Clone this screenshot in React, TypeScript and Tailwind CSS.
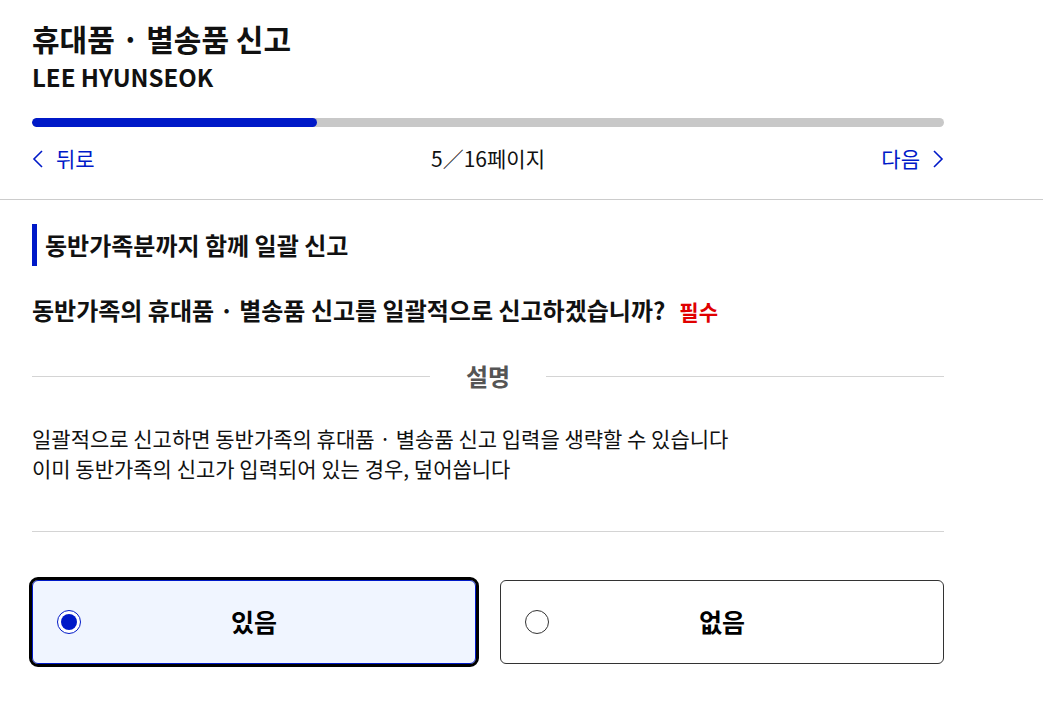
import React, { useState } from "react";

const font = { fontFamily: '"Noto Sans CJK KR", "Noto Sans", sans-serif' };

const Chevron = ({ dir }: { dir: "left" | "right" }) => (
  <svg width="12" height="20" viewBox="0 0 12 20" fill="none" stroke="currentColor" strokeWidth="1.6">
    {dir === "left" ? <path d="M10 2 L2 10 L10 18" /> : <path d="M2 2 L10 10 L2 18" />}
  </svg>
);

const Option = ({ label, selected, onClick }: { label: string; selected: boolean; onClick: () => void }) => (
  <button
    onClick={onClick}
    className={
      "relative flex h-[84px] items-center rounded-md px-6 " +
      (selected
        ? "border border-[#0019c8] bg-[#f0f5ff] outline-[3px] outline-black"
        : "border border-[#333] bg-white")
    }
  >
    <span
      className={
        "flex h-6 w-6 items-center justify-center rounded-full border bg-white " +
        (selected ? "border-[#0019c8]" : "border-[#333]")
      }
    >
      {selected && <span className="h-4 w-4 rounded-full bg-[#0019c8]" />}
    </span>
    <span className="absolute inset-0 flex items-center justify-center text-[25px] font-bold text-black">
      {label}
    </span>
  </button>
);

export default function App() {
  const [choice, setChoice] = useState("yes");

  return (
    <div className="min-h-screen bg-white text-[#111]" style={font}>
      {/* Header */}
      <header className="border-b border-[#ccc] pb-5">
        <div className="mx-8 w-[912px] pt-[17px]">
          <h1 className="text-[30px] font-bold leading-[42px]">휴대품 · 별송품 신고</h1>
          <p className="text-[24px] font-bold leading-[36px]">LEE HYUNSEOK</p>
          <div className="mt-[23px] h-[9px] w-full overflow-hidden rounded-full bg-[#c8c8c8]">
            <div className="h-full rounded-full bg-[#0019c8]" style={{ width: `${(5 / 16) * 100}%` }} />
          </div>
          <nav className="mt-3 flex h-10 items-center justify-between text-[21px]">
            <button className="flex items-center gap-3 text-[#0019c8]">
              <Chevron dir="left" />
              <span>뒤로</span>
            </button>
            <span className="text-[#111]">5／16페이지</span>
            <button className="flex items-center gap-3 text-[#0019c8]">
              <span>다음</span>
              <Chevron dir="right" />
            </button>
          </nav>
        </div>
      </header>

      {/* Content */}
      <main className="mx-8 w-[912px] pt-6">
        <h2 className="flex h-[42px] items-center border-l-[5px] border-[#0019c8] pl-2 text-[24px] font-bold">
          동반가족분까지 함께 일괄 신고
        </h2>

        <p className="mt-[27px] flex items-baseline gap-[14px] text-[24px] font-bold leading-[33px]">
          동반가족의 휴대품 · 별송품 신고를 일괄적으로 신고하겠습니까?
          <span className="text-[21px] text-[#e00000]">필수</span>
        </p>

        <div className="mt-[33px] flex items-center">
          <div className="h-px flex-1 bg-[#d4d4d4]" />
          <span className="px-9 text-[24px] font-bold leading-[30px] text-[#555]">설명</span>
          <div className="h-px flex-1 bg-[#d4d4d4]" />
        </div>

        <div className="mt-8 text-[21px] leading-[30px]">
          <p>일괄적으로 신고하면 동반가족의 휴대품 · 별송품 신고 입력을 생략할 수 있습니다</p>
          <p>이미 동반가족의 신고가 입력되어 있는 경우, 덮어씁니다</p>
        </div>

        <div className="mt-12 h-px bg-[#d4d4d4]" />

        <div className="mt-12 grid grid-cols-2 gap-6">
          <Option label="있음" selected={choice === "yes"} onClick={() => setChoice("yes")} />
          <Option label="없음" selected={choice === "no"} onClick={() => setChoice("no")} />
        </div>
      </main>
    </div>
  );
}
